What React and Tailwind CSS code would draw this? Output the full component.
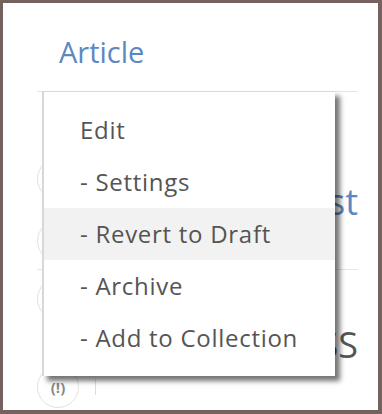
import React from 'react';

const items = ['Edit', '- Settings', '- Revert to Draft', '- Archive', '- Add to Collection'];

function Avatar({ children }) {
  return (
    <div className="w-[42px] h-[42px] rounded-full border border-[#e2e2e2] flex items-center justify-center text-[15px] font-bold text-[#888]">
      {children}
    </div>
  );
}

export default function App() {
  return (
    <div className="w-[382px] h-[414px] bg-[#75625e] pt-[3px] pl-[3px] pr-[4px] pb-[4px]" style={{ fontFamily: '"Open Sans", sans-serif' }}>
      <div className="relative h-full bg-white overflow-hidden">
        <div className="pt-[34px] pl-[56px] text-[29px] leading-none text-[#5b88c2]">Article</div>

        {/* page behind the menu */}
        <div className="mt-[25px] ml-[34px] w-[321px] flex flex-col">
          <div className="h-[178px] border-t border-[#e6e6e6] flex justify-between pt-[66px]">
            <div className="flex flex-col gap-[20px]">
              <Avatar />
              <Avatar />
            </div>
            <div className="mt-[26px] text-[36px] leading-none text-[#5b88c2]">Post</div>
          </div>
          <div className="border-t border-[#e6e6e6] flex justify-between pt-[8px]">
            <div className="flex flex-col gap-[46px]">
              <Avatar />
              <div className="flex items-center gap-[16px]">
                <Avatar>(!)</Avatar>
                <div className="w-px h-[16px] bg-[#ddd]" />
              </div>
            </div>
            <div className="mt-[49px] text-[36px] leading-none text-[#555]">CLASS</div>
          </div>
        </div>

        {/* dropdown */}
        <div className="absolute left-[39px] top-[88px] w-[293px] bg-white border-l-2 border-t border-[#d8d8d8] py-3 shadow-[5px_5px_5px_rgba(0,0,0,0.55)]">
          {items.map((label) => (
            <div
              key={label}
              className={`h-[52px] pl-[36px] text-[24px] leading-[52px] tracking-[0.03em] text-[#555] ${label === '- Revert to Draft' ? 'bg-[#f2f2f2]' : ''}`}
            >
              {label}
            </div>
          ))}
        </div>
      </div>
    </div>
  );
}
